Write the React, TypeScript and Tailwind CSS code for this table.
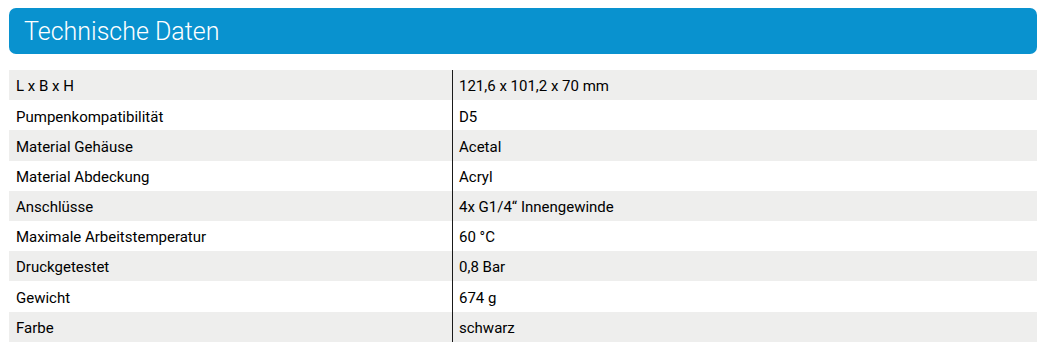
const specs: [string, string][] = [
  ['L x B x H', '121,6 x 101,2 x 70 mm'],
  ['Pumpenkompatibilität', 'D5'],
  ['Material Gehäuse', 'Acetal'],
  ['Material Abdeckung', 'Acryl'],
  ['Anschlüsse', '4x G1/4“ Innengewinde'],
  ['Maximale Arbeitstemperatur', '60 °C'],
  ['Druckgetestet', '0,8 Bar'],
  ['Gewicht', '674 g'],
  ['Farbe', 'schwarz'],
];

export default function App() {
  return (
    <div className="w-[1045px] h-[350px] bg-white pl-[9px] pr-[8px] pt-[8px] font-['Roboto',sans-serif] overflow-hidden">
      {/* header bar */}
      <div className="h-[46px] rounded-[7px] bg-[#0992cf] flex items-center pl-[15px]">
        <h2 className="text-[25px] font-light text-white leading-none">Technische Daten</h2>
      </div>

      {/* spec table */}
      <div className="mt-[16px] flex flex-col">
        {specs.map(([label, value], i) => (
          <div
            key={label}
            className={`flex h-[30.2px] items-center text-[15px] text-black ${i % 2 === 0 ? 'bg-[#eeeeed]' : 'bg-white'}`}
          >
            <div className="w-[443px] pl-[7px] pt-[3px]">{label}</div>
            <div className="flex-1 self-stretch flex items-center border-l-[1.5px] border-[#1a1a1a] pl-[6px] pt-[3px]">{value}</div>
          </div>
        ))}
      </div>
    </div>
  );
}
